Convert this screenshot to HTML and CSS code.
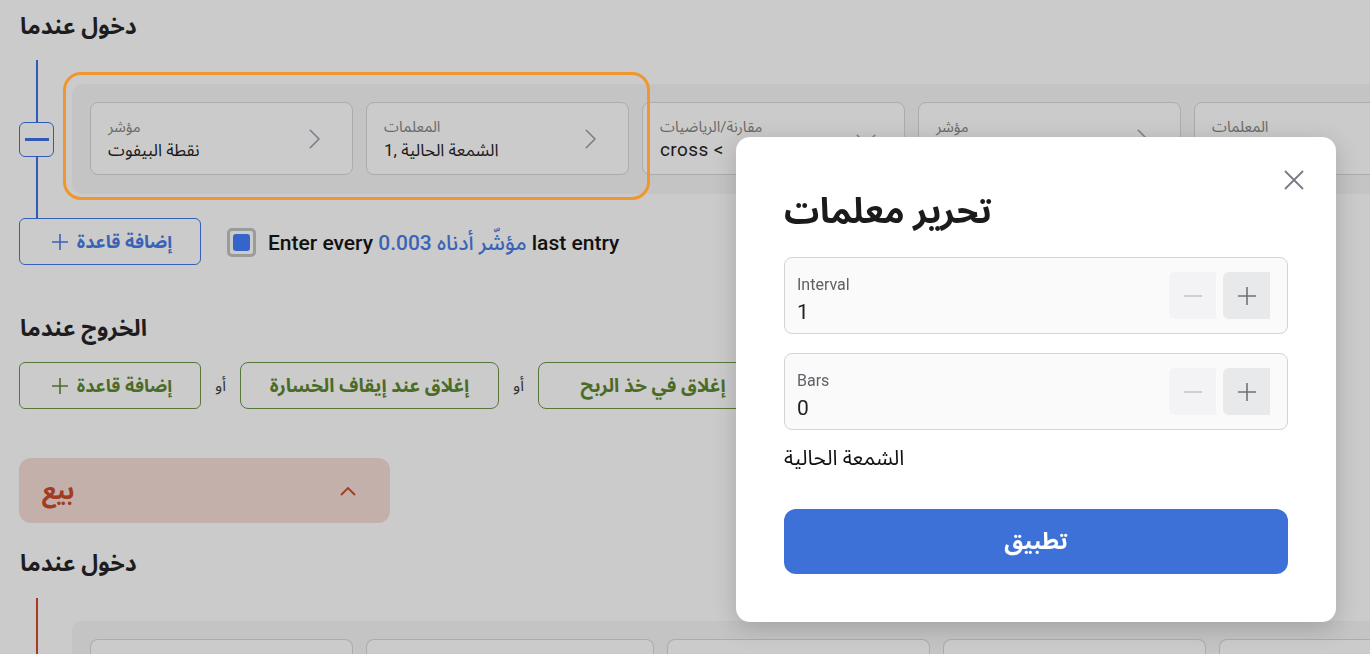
FILE: index.html
```html
<!DOCTYPE html>
<html lang="ar">
<head>
<meta charset="utf-8">
<title>تحرير معلمات</title>
<link rel="stylesheet" href="styles.css">
</head>
<body>
<main class="page">
  <h2 class="heading">دخول عندما</h2>
  <section class="rule-area">
    <div class="rail rail-blue">
      <span class="rail-line"></span>
      <button class="rail-btn" aria-label="طي"><span class="rail-minus"></span></button>
      <span class="rail-line"></span>
    </div>
    <div class="strip-wrap">
      <div class="highlight"></div>
      <div class="strip">
        <div class="card">
          <div class="card-text"><span class="card-label">مؤشر</span><span class="card-value">نقطة البيفوت</span></div>
          <svg class="chev" viewBox="0 0 24 24"><path d="M9 5l7 7-7 7"/></svg>
        </div>
        <div class="card">
          <div class="card-text"><span class="card-label">المعلمات</span><span class="card-value">1, الشمعة الحالية</span></div>
          <svg class="chev" viewBox="0 0 24 24"><path d="M9 5l7 7-7 7"/></svg>
        </div>
        <div class="card">
          <div class="card-text"><span class="card-label">مقارنة/الرياضيات</span><span class="card-value latin">cross &lt;</span></div>
          <svg class="chev" viewBox="0 0 24 24"><path d="M5 9l7 7 7-7"/></svg>
        </div>
        <div class="card">
          <div class="card-text"><span class="card-label">مؤشر</span><span class="card-value">نقطة البيفوت</span></div>
          <svg class="chev" viewBox="0 0 24 24"><path d="M9 5l7 7-7 7"/></svg>
        </div>
        <div class="card">
          <div class="card-text"><span class="card-label">المعلمات</span><span class="card-value">1, الشمعة الحالية</span></div>
          <svg class="chev" viewBox="0 0 24 24"><path d="M9 5l7 7-7 7"/></svg>
        </div>
      </div>
    </div>
  </section>
  <div class="add-row">
    <button class="add-btn add-blue">
      <svg class="plus" viewBox="0 0 20 20"><path d="M10 2v16M2 10h16"/></svg>
      <span>إضافة قاعدة</span>
    </button>
    <label class="check">
      <span class="check-box"><span class="check-fill"></span></span>
      <span class="check-text">Enter every <span class="blue-txt">0.003 مؤشّر أدناه</span> last entry</span>
    </label>
  </div>

  <h2 class="heading exit-heading">الخروج عندما</h2>
  <div class="exit-row">
    <button class="add-btn add-green">
      <svg class="plus" viewBox="0 0 20 20"><path d="M10 2v16M2 10h16"/></svg>
      <span>إضافة قاعدة</span>
    </button>
    <span class="or">أو</span>
    <button class="exit-btn w259">إغلاق عند إيقاف الخسارة</button>
    <span class="or">أو</span>
    <button class="exit-btn w220">إغلاق في خذ الربح</button>
  </div>

  <div class="sell">
    <span class="sell-title">بيع</span>
    <svg class="sell-chev" viewBox="0 0 24 24"><path d="M5 16l7-7 7 7"/></svg>
  </div>

  <h2 class="heading heading-2">دخول عندما</h2>
  <section class="rule-area rule-area-2">
    <div class="rail rail-red">
      <span class="rail-line"></span>
    </div>
    <div class="strip strip-2">
      <div class="card"></div>
      <div class="card wide"></div>
      <div class="card"></div>
      <div class="card"></div>
      <div class="card"></div>
    </div>
  </section>
</main>

<div class="modal" role="dialog">
  <button class="close" aria-label="إغلاق">
    <svg viewBox="0 0 24 24"><path d="M3 3l18 18M21 3L3 21"/></svg>
  </button>
  <h1 class="modal-title">تحرير معلمات</h1>
  <div class="field">
    <div class="field-text"><span class="field-label">Interval</span><span class="field-value">1</span></div>
    <div class="steppers">
      <span class="step step-minus"><svg viewBox="0 0 20 20"><path d="M1 10h18"/></svg></span>
      <span class="step step-plus"><svg viewBox="0 0 20 20"><path d="M10 1v18M1 10h18"/></svg></span>
    </div>
  </div>
  <div class="field">
    <div class="field-text"><span class="field-label">Bars</span><span class="field-value">0</span></div>
    <div class="steppers">
      <span class="step step-minus"><svg viewBox="0 0 20 20"><path d="M1 10h18"/></svg></span>
      <span class="step step-plus"><svg viewBox="0 0 20 20"><path d="M10 1v18M1 10h18"/></svg></span>
    </div>
  </div>
  <p class="candle">الشمعة الحالية</p>
  <button class="apply">تطبيق</button>
</div>
</body>
</html>
```
FILE: styles.css
```css
* { box-sizing: border-box; }
html, body { margin: 0; height: 100%; }
body {
  background: #cbcbcb;
  font-family: Roboto, "Noto Sans Arabic", "Noto Naskh Arabic", "DejaVu Sans", sans-serif;
  color: #1c1c1c;
  overflow: hidden;
}
button { font-family: inherit; cursor: pointer; }

.page { padding: 12px 0 0 20px; }

.heading {
  margin: 0;
  font-size: 23px;
  line-height: 30px;
  font-weight: 700;
  color: #1d1d1f;
}

.rule-area {
  display: flex;
  margin-top: 18px;
  height: 158px;
  align-items: center;
}
.rail {
  width: 35px;
  margin-left: -1px;
  height: 100%;
  display: flex;
  flex-direction: column;
  align-items: center;
  flex-shrink: 0;
}
.rail-line { flex: 1; width: 2px; background: #2f5bb7; }
.rail-red .rail-line { background: #a83b1f; }
.rail-btn {
  width: 35px;
  height: 35px;
  padding: 0;
  border: 1px solid #2f5bb7;
  border-radius: 6px;
  background: transparent;
  display: flex;
  align-items: center;
  justify-content: center;
}
.rail-minus { width: 24px; height: 3px; background: #2f5bb7; }

.strip-wrap {
  position: relative;
  margin-left: 18px;
  flex: 1;
  min-width: 0;
}
.highlight {
  position: absolute;
  left: -9px;
  top: -12px;
  width: 587px;
  height: 128px;
  border: 3px solid #f0962f;
  border-radius: 18px;
  z-index: 2;
  pointer-events: none;
}
.strip {
  background: #c4c4c4;
  height: 110px;
  padding: 18px;
  display: flex;
  gap: 13px;
  overflow: hidden;
  border-radius: 10px 0 0 10px;
}
.card {
  flex: 0 0 263px;
  height: 73px;
  border: 1px solid #acacac;
  border-radius: 8px;
  background: #cbcbcb;
  display: flex;
  align-items: center;
  padding: 0 23px 0 17px;
}
.card.wide { flex-basis: 288px; }
.card-text { flex: 1; display: flex; flex-direction: column; gap: 1px; margin-top: 2px; }
.card-label { font-size: 15px; line-height: 20px; color: #6a6a6a; }
.card-value { font-size: 17px; line-height: 24px; color: #1a1a1a; }
.card-value.latin { font-size: 19px; letter-spacing: 0.4px; }
.chev {
  width: 30px;
  height: 30px;
  fill: none;
  stroke: #7d8088;
  stroke-width: 1.3;
  stroke-linecap: round;
  stroke-linejoin: round;
}

.add-row {
  display: flex;
  align-items: center;
  gap: 26px;
  margin-left: -1px;
}
.add-btn {
  width: 182px;
  height: 47px;
  border-radius: 6px;
  background: transparent;
  display: flex;
  align-items: center;
  justify-content: center;
  gap: 7px;
  font-size: 18px;
  font-weight: 700;
  padding: 0 0 0 2px;
}
.add-btn .plus {
  width: 20px;
  height: 20px;
  fill: none;
  stroke-width: 1.6;
}
.add-blue { border: 1px solid #3561b8; color: #3a63b6; }
.add-blue .plus { stroke: #3a63b6; }
.add-green { border: 1px solid #57773a; color: #4b6c27; }
.add-green .plus { stroke: #4b6c27; }

.check { display: flex; align-items: center; gap: 12px; margin-top: 2px; }
.check-box {
  width: 29px;
  height: 29px;
  border: 3px solid #9b9b9b;
  border-radius: 5px;
  display: flex;
  align-items: center;
  justify-content: center;
}
.check-fill { width: 17px; height: 17px; background: #3564cb; border-radius: 3px; }
.check-text { font-size: 21px; font-weight: 500; color: #111; }
.blue-txt { color: #3a64b6; }

.exit-heading { margin-top: 49px; }
.exit-row {
  display: flex;
  align-items: center;
  margin-top: 18px;
  margin-left: -1px;
}
.or { font-size: 16px; color: #333; width: 39px; text-align: center; }
.exit-btn {
  height: 47px;
  border: 1px solid #57773a;
  border-radius: 8px;
  background: transparent;
  color: #4b6c27;
  font-size: 19px;
  font-weight: 700;
  padding: 0;
}
.w259 { width: 259px; }
.w220 { width: 230px; }

.sell {
  margin-top: 49px;
  margin-left: -1px;
  width: 371px;
  height: 65px;
  border-radius: 12px;
  background: #c3b0ab;
  display: flex;
  align-items: center;
  justify-content: space-between;
  padding: 0 30px 0 23px;
}
.sell-title { font-size: 25px; font-weight: 700; color: #a23b20; }
.sell-chev {
  width: 24px;
  height: 24px;
  fill: none;
  stroke: #a23b20;
  stroke-width: 1.8;
}

.heading-2 { margin-top: 26px; }
.rule-area-2 { margin-top: 19px; height: 57px; align-items: flex-start; }
.strip-2 { margin-left: 18px; margin-top: 23px; flex: 1; min-width: 0; height: 34px; padding-bottom: 0; border-radius: 10px 0 0 0; }
.strip-2 .card { height: 16px; border-bottom: 0; border-radius: 8px 8px 0 0; }

/* modal */
.modal {
  position: fixed;
  left: 736px;
  top: 137px;
  width: 600px;
  height: 485px;
  background: #fff;
  border-radius: 14px;
  box-shadow: 0 6px 24px rgba(0, 0, 0, 0.18);
  padding: 50px 48px 48px;
  z-index: 10;
}
.close {
  position: absolute;
  right: 30px;
  top: 31px;
  width: 24px;
  height: 24px;
  padding: 0;
  border: 0;
  background: transparent;
}
.close svg { width: 24px; height: 24px; fill: none; stroke: #777b84; stroke-width: 1.8; display: block; }
.modal-title {
  margin: 0;
  font-size: 35px;
  line-height: 50px;
  font-weight: 700;
  color: #1b1b1b;
}
.field {
  margin-top: 20px;
  height: 77px;
  border: 1px solid #d4d4d8;
  border-radius: 8px;
  background: #fafafa;
  display: flex;
  align-items: center;
  padding: 0 17px 0 12px;
}
.field + .field { margin-top: 19px; }
.field-text { flex: 1; display: flex; flex-direction: column; margin-top: 8px; }
.field-label { font-size: 16px; line-height: 22px; color: #5f6166; }
.field-value { font-size: 21px; line-height: 28px; color: #222; margin-top: 2px; }
.steppers { display: flex; gap: 7px; }
.step {
  width: 47px;
  height: 47px;
  border-radius: 6px 0 0 6px;
  display: flex;
  align-items: center;
  justify-content: center;
}
.step svg { width: 20px; height: 20px; fill: none; stroke-width: 1.6; }
.step-minus { background: #f3f3f5; }
.step-minus svg { stroke: #c4c6cb; }
.step-plus { background: #e8e9eb; }
.step-plus svg { stroke: #70737b; }
.candle {
  margin: 14px 0 0;
  font-size: 21px;
  line-height: 28px;
  color: #111;
}
.apply {
  margin-top: 37px;
  width: 100%;
  height: 65px;
  border: 0;
  border-radius: 12px;
  background: #3e71d8;
  color: #fff;
  font-size: 23px;
  font-weight: 700;
}
```
